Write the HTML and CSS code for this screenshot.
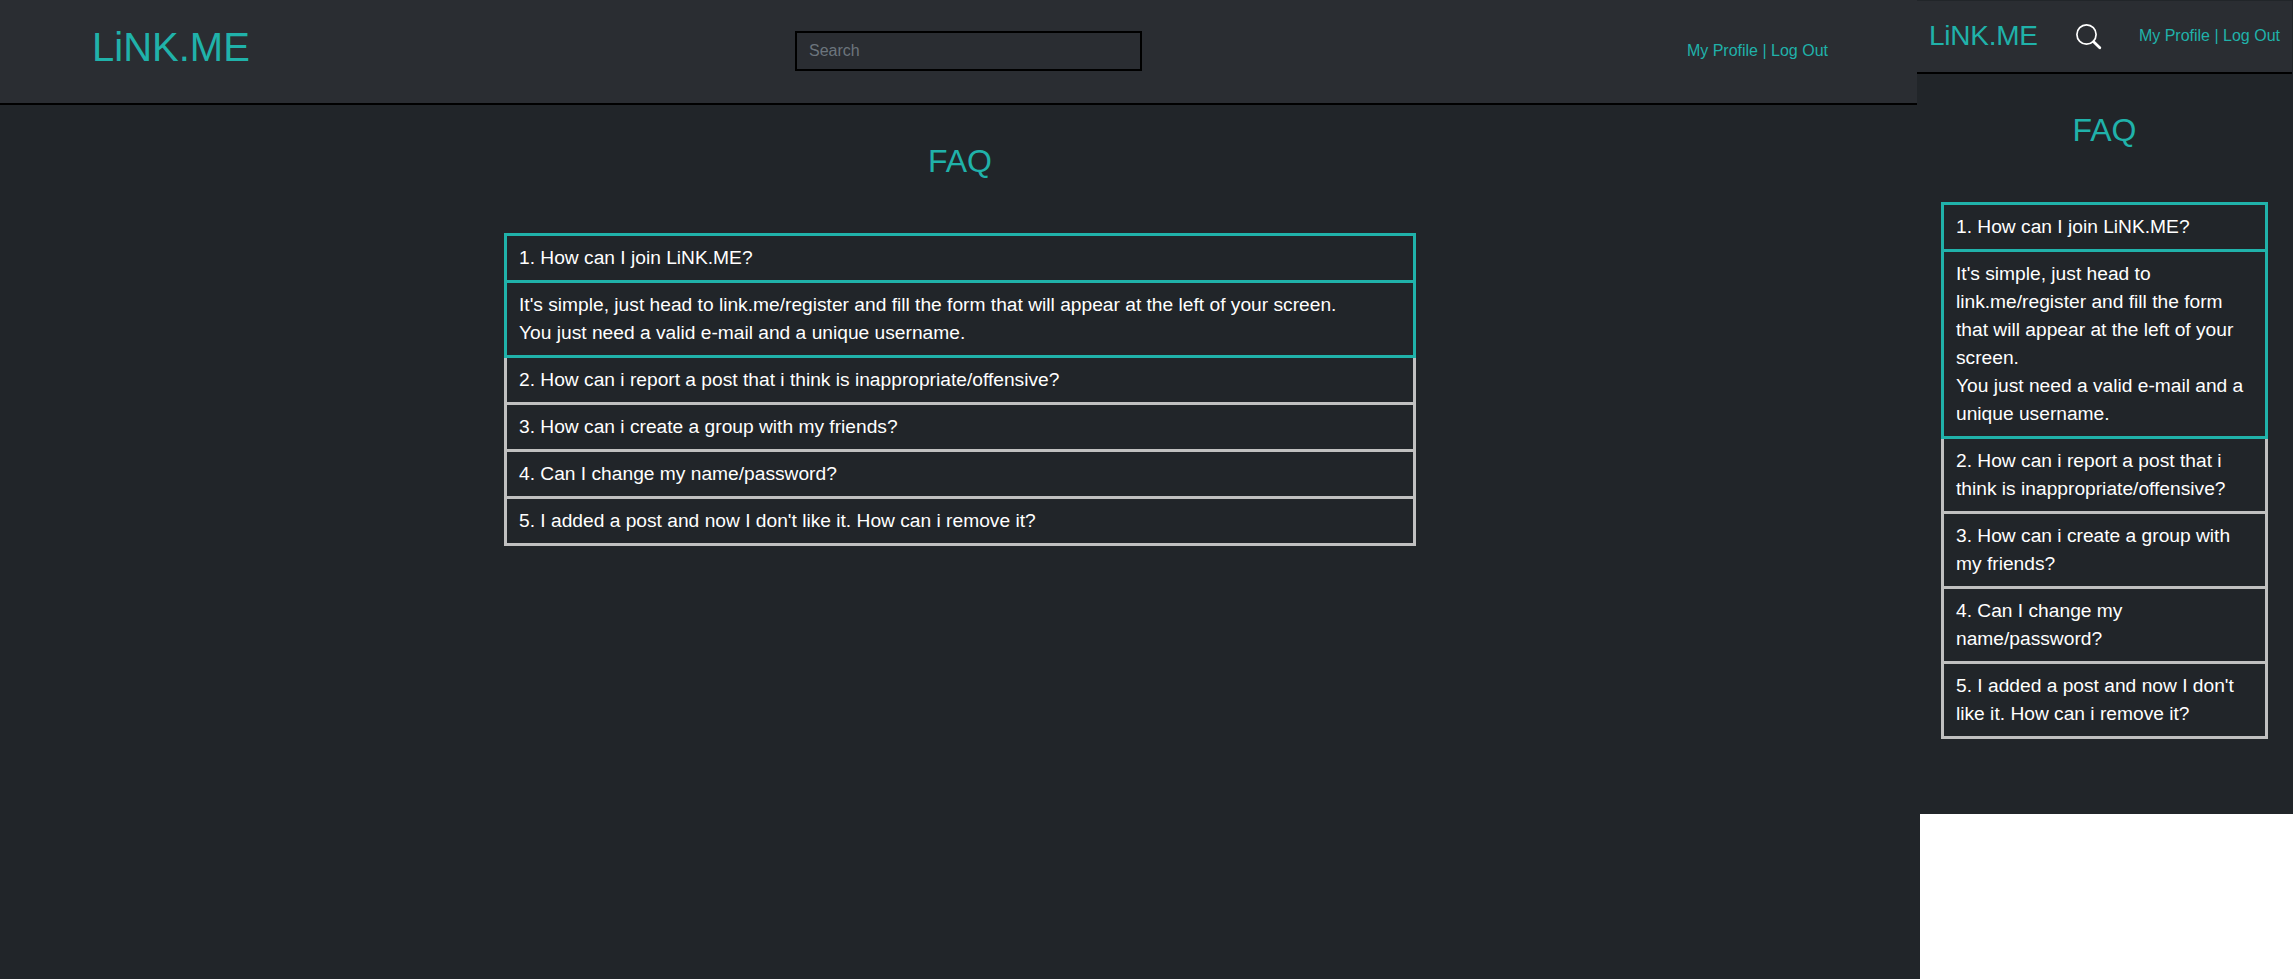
FILE: index.html
```html
<!DOCTYPE html>
<html lang="en">
<head>
<meta charset="utf-8">
<title>LiNK.ME - FAQ</title>
<link rel="stylesheet" href="styles.css">
</head>
<body>
<div class="desktop">
  <header class="header">
    <a class="brand">LiNK.ME</a>
    <input class="search" type="text" placeholder="Search">
    <nav class="nav">My Profile | Log Out</nav>
  </header>
  <h1 class="title">FAQ</h1>
  <ul class="faq">
    <li class="item active">1. How can I join LiNK.ME?</li>
    <li class="item active">It's simple, just head to link.me/register and fill the form that will appear at the left of your screen.<br>You just need a valid e-mail and a unique username.</li>
    <li class="item">2. How can i report a post that i think is inappropriate/offensive?</li>
    <li class="item">3. How can i create a group with my friends?</li>
    <li class="item">4. Can I change my name/password?</li>
    <li class="item">5. I added a post and now I don't like it. How can i remove it?</li>
  </ul>
</div>
<div class="mobile">
  <header class="header">
    <a class="brand">LiNK.ME</a>
    <svg class="icon" width="26" height="26" viewBox="0 0 26 26" fill="none" stroke="#fff" stroke-linecap="round"><circle cx="10.5" cy="10.5" r="9.6" stroke-width="1.7"/><path d="M17.6 17.8L23.8 23.8" stroke-width="2.8"/></svg>
    <nav class="nav">My Profile | Log Out</nav>
  </header>
  <h1 class="title">FAQ</h1>
  <ul class="faq">
    <li class="item active">1. How can I join LiNK.ME?</li>
    <li class="item active">It's simple, just head to link.me/register and fill the form that will appear at the left of your screen.<br>You just need a valid e-mail and a unique username.</li>
    <li class="item">2. How can i report a post that i think is inappropriate/offensive?</li>
    <li class="item">3. How can i create a group with my friends?</li>
    <li class="item">4. Can I change my name/password?</li>
    <li class="item">5. I added a post and now I don't like it. How can i remove it?</li>
  </ul>
</div>
</body>
</html>
```
FILE: styles.css
```css
* { box-sizing: border-box; }
body {
  margin: 0;
  display: flex;
  align-items: flex-start;
  background: #fff;
  color: #fff;
  font: 16px/24px "Liberation Sans", Arial, sans-serif;
  overflow: hidden;
}
.desktop, .mobile { background: #212529; flex: none; }
.desktop { width: 1920px; height: 979px; }
.mobile {
  width: 376px;
  height: 814px;
  margin-left: -3px;
  border-top: 1px solid #212529;
  border-right: 1px solid #212529;
}
.header {
  display: flex;
  align-items: flex-start;
  background: #2a2d32;
  border-bottom: 2px solid #000;
}
.brand, .nav, .title { color: #20b2aa; }
.desktop .header { height: 105px; padding: 31px 92px 0 92px; }
.desktop .brand { font-size: 40px; line-height: 48px; margin-top: -8px; width: 703px; }
.search {
  width: 347px;
  height: 40px;
  padding: 6px 12px;
  border: 2px solid #000;
  background: transparent;
  color: #fff;
  font: inherit;
}
.search::placeholder { color: #6c757d; opacity: 1; }
.desktop .nav { margin: 8px 0 0 auto; }
.title { margin: 0; font-size: 32px; font-weight: 400; line-height: 38px; text-align: center; }
.desktop .title { padding-top: 37px; }
.faq {
  margin: 0;
  padding: 0;
  list-style: none;
  font-size: 19.2px;
  line-height: 28px;
}
.item { padding: 8px 12px; border: 3px solid #c0c0c0; border-top: 0; }
.item.active { border-color: #20b2aa; }
.item:first-child { border-top: 3px solid #20b2aa; }
.desktop .faq { width: 912px; margin: 53px auto 0; }
.mobile .header { height: 73px; padding: 23px 12px 0 12px; }
.mobile .brand {
  font-size: 28px;
  line-height: 34px;
  letter-spacing: -0.25px;
  margin-top: -5px;
  width: 147px;
}
.mobile .nav { margin-left: auto; }
.mobile .title { padding-top: 37px; }
.mobile .faq { width: 327px; margin: 53px 0 0 24px; }
```
